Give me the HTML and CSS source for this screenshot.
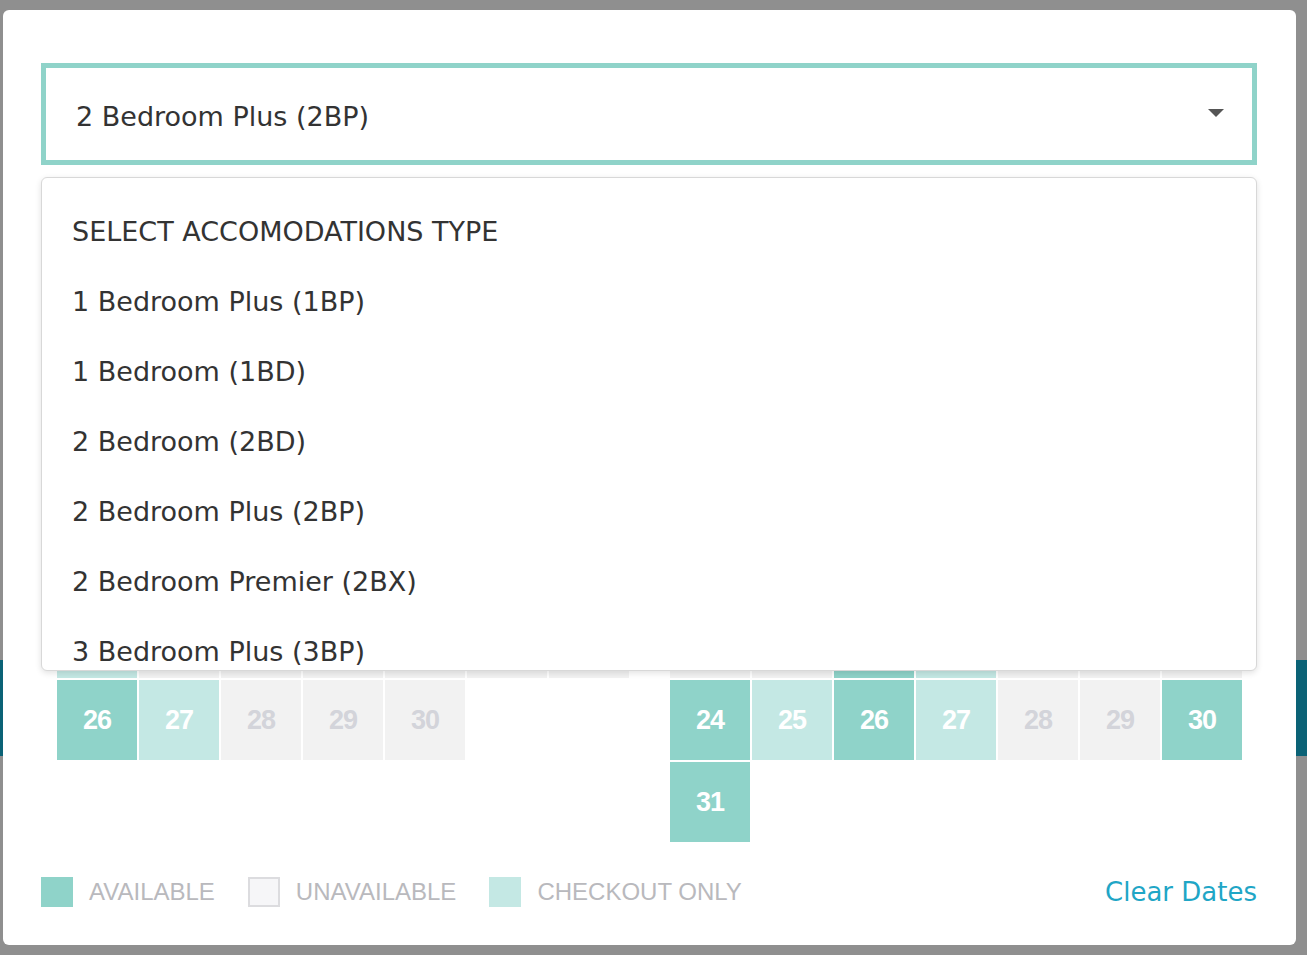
FILE: index.html
```html
<!DOCTYPE html>
<html lang="en">
<head>
    <meta charset="UTF-8">
    <meta name="viewport" content="width=device-width, initial-scale=1.0">
    <title>Select Accomodations</title>
    <link rel="stylesheet" href="styles.css">
</head>
<body>
    <div class="page">
        <div class="banner"></div>
    </div>

    <div class="modal">
        <div class="select-wrap">
            <div class="select">
                <span>2 Bedroom Plus (2BP)</span>
                <span class="caret"></span>
            </div>
            <ul class="options">
                <li>SELECT ACCOMODATIONS TYPE</li>
                <li>1 Bedroom Plus (1BP)</li>
                <li>1 Bedroom (1BD)</li>
                <li>2 Bedroom (2BD)</li>
                <li>2 Bedroom Plus (2BP)</li>
                <li>2 Bedroom Premier (2BX)</li>
                <li>3 Bedroom Plus (3BP)</li>
            </ul>
        </div>

        <div class="calendar">
            <div class="month">
                <div class="month-title">September 2021</div>
                <div class="weekdays">
                    <span>Su</span><span>Mo</span><span>Tu</span><span>We</span><span>Th</span><span>Fr</span><span>Sa</span>
                </div>
                <div class="days" id="sep"></div>
            </div>
            <div class="month">
                <div class="month-title">October 2021</div>
                <div class="weekdays">
                    <span>Su</span><span>Mo</span><span>Tu</span><span>We</span><span>Th</span><span>Fr</span><span>Sa</span>
                </div>
                <div class="days" id="oct"></div>
            </div>
        </div>

        <div class="legend">
            <div class="legend-item"><span class="swatch available"></span>AVAILABLE</div>
            <div class="legend-item"><span class="swatch unavailable"></span>UNAVAILABLE</div>
            <div class="legend-item"><span class="swatch checkout"></span>CHECKOUT ONLY</div>
            <a class="clear-dates" href="#">Clear Dates</a>
        </div>
    </div>

    <script>
        // one letter per day: a = available, c = checkout only, u = unavailable
        const months = {
            sep: { start: 4, states: 'aaaaaaacuuuuaaaaaa' + 'cuuuuuuacuuu' },
            oct: { start: 6, states: 'uuaaaaacuuaaaaac' + 'uuacuuuacacuuaa' }
        };
        const classes = { a: 'available', c: 'checkout', u: 'unavailable' };

        Object.keys(months).forEach(function(id) {
            const el = document.getElementById(id);
            const m = months[id];
            for (let d = 1; d <= m.states.length; d++) {
                const cell = document.createElement('div');
                cell.className = 'day ' + classes[m.states[d - 1]];
                cell.textContent = d;
                if (d === 1) cell.style.gridColumnStart = m.start;
                el.appendChild(cell);
            }
        });
    </script>
</body>
</html>
```

FILE: styles.css
```css
body {
    margin: 0;
    padding: 0;
    background-color: #8f8f8f;
    font-family: "DejaVu Sans", Verdana, sans-serif;
    overflow: hidden;
}

.page {
    height: 955px;
    box-sizing: border-box;
    padding-top: 660px;
}

.banner {
    height: 96px;
    background-color: #0b6276;
}

.modal {
    position: fixed;
    top: 10px;
    left: 3px;
    width: 1293px;
    box-sizing: border-box;
    padding: 53px 39px 38px 38px;
    background-color: #fff;
    border-radius: 6px;
}

.select-wrap {
    position: relative;
}

.select {
    display: flex;
    justify-content: space-between;
    align-items: center;
    height: 102px;
    box-sizing: border-box;
    border: 5px solid #8fd3c9;
    padding: 4px 28px 0 30px;
    font-size: 27px;
    color: #333;
}

.caret {
    width: 0;
    height: 0;
    border-left: 8px solid transparent;
    border-right: 8px solid transparent;
    border-top: 8px solid #555;
    margin-top: -6px;
}

.options {
    position: absolute;
    top: 114px;
    left: 0;
    right: 0;
    height: 494px;
    box-sizing: border-box;
    margin: 0;
    padding: 19px 0 0 30px;
    list-style: none;
    overflow: hidden;
    background-color: #fff;
    border: 1px solid #d8d8d8;
    border-radius: 6px;
    box-shadow: 0 2px 6px rgba(0, 0, 0, 0.12);
    z-index: 2;
}

.options li {
    height: 70px;
    line-height: 70px;
    font-size: 27px;
    color: #333;
}

.calendar {
    display: flex;
    justify-content: space-between;
    margin-top: 30px;
    padding: 0 15px 0 16px;
}

.month {
    width: 572px;
}

.month-title {
    height: 110px;
    line-height: 110px;
    text-align: center;
    font-size: 24px;
    color: #333;
}

.weekdays {
    display: grid;
    grid-template-columns: repeat(7, 80px);
    gap: 2px;
    height: 45px;
    line-height: 45px;
    text-align: center;
    font-size: 18px;
    color: #999;
}

.days {
    display: grid;
    grid-template-columns: repeat(7, 80px);
    grid-auto-rows: 80px;
    gap: 2px;
    margin-top: 2px;
}

.day {
    display: flex;
    justify-content: center;
    align-items: center;
    font-family: "Liberation Sans", Arial, sans-serif;
    font-weight: bold;
    font-size: 27px;
    letter-spacing: -1px;
    color: #fff;
}

.day.available {
    background-color: #8fd3c9;
}

.day.checkout {
    background-color: #c4e8e4;
}

.day.unavailable {
    background-color: #f2f2f2;
    color: #d3d4da;
}

.legend {
    display: flex;
    align-items: center;
    margin-top: 35px;
    height: 30px;
}

.legend-item {
    display: flex;
    align-items: center;
    margin-right: 33px;
    font-family: "Liberation Sans", Arial, sans-serif;
    font-size: 24px;
    color: #b9b9bd;
}

.swatch {
    width: 32px;
    height: 30px;
    box-sizing: border-box;
    margin-right: 16px;
}

.swatch.available {
    background-color: #8fd3c9;
}

.swatch.unavailable {
    background-color: #f6f6f8;
    border: 2px solid #dcdcdf;
}

.swatch.checkout {
    background-color: #c4e8e4;
}

.clear-dates {
    margin-left: auto;
    font-size: 26px;
    color: #1fa6c6;
    text-decoration: none;
}
```
